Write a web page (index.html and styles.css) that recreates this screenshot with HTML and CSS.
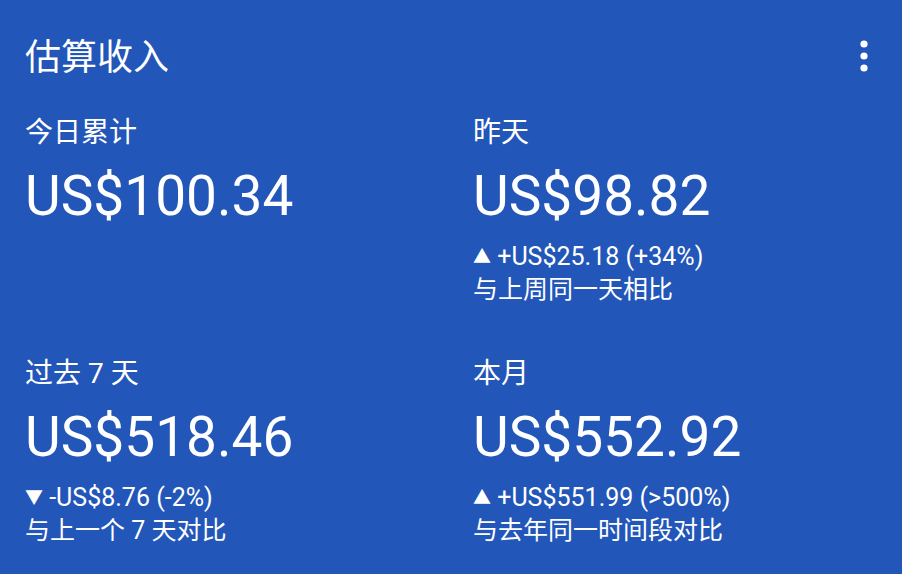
FILE: index.html
```html
<!DOCTYPE html>
<html lang="zh-CN">
<head>
    <meta charset="UTF-8">
    <meta name="viewport" content="width=device-width, initial-scale=1.0">
    <title>估算收入</title>
    <link rel="stylesheet" href="styles.css">
</head>
<body>
    <div class="card">
        <div class="card-header">
            <h1>估算收入</h1>
            <button class="menu-btn" aria-label="更多">
                <svg width="8" height="32" viewBox="0 0 8 32">
                    <circle cx="4" cy="4" r="3.6" fill="#fff"/>
                    <circle cx="4" cy="16" r="3.6" fill="#fff"/>
                    <circle cx="4" cy="28" r="3.6" fill="#fff"/>
                </svg>
            </button>
        </div>

        <div class="stats">
            <div class="stat">
                <div class="stat-label">今日累计</div>
                <div class="stat-value">US$100.34</div>
            </div>
            <div class="stat">
                <div class="stat-label">昨天</div>
                <div class="stat-value">US$98.82</div>
                <div class="stat-change"><span class="arrow">▲</span> +US$25.18 (+34%)</div>
                <div class="stat-compare">与上周同一天相比</div>
            </div>
            <div class="stat">
                <div class="stat-label">过去 7 天</div>
                <div class="stat-value">US$518.46</div>
                <div class="stat-change"><span class="arrow">▼</span> -US$8.76 (-2%)</div>
                <div class="stat-compare">与上一个 7 天对比</div>
            </div>
            <div class="stat">
                <div class="stat-label">本月</div>
                <div class="stat-value">US$552.92</div>
                <div class="stat-change"><span class="arrow">▲</span> +US$551.99 (&gt;500%)</div>
                <div class="stat-compare">与去年同一时间段对比</div>
            </div>
        </div>
    </div>
</body>
</html>
```

FILE: styles.css
```css
body {
    margin: 0;
    background-color: #2256b8;
    font-family: Roboto, "Noto Sans CJK SC", sans-serif;
    color: #ffffff;
}
.card {
    width: 902px;
    height: 574px;
    box-sizing: border-box;
    padding: 31px 25px 0 25px;
}
.card-header {
    display: flex;
    justify-content: space-between;
    align-items: center;
    height: 46px;
}
h1 {
    margin: 0;
    font-size: 36px;
    font-weight: 400;
}
.menu-btn {
    background: none;
    border: none;
    padding: 0;
    margin-right: 9px;
    margin-top: 3px;
    display: flex;
}
.stats {
    display: grid;
    grid-template-columns: 1fr 1fr;
    column-gap: 44px;
    margin-top: 40px;
}
.stat {
    height: 241px;
}
.stat-label {
    font-size: 28px;
    line-height: 32px;
    font-weight: 400;
}
.stat-value {
    font-size: 55px;
    line-height: 68px;
    margin-top: 13px;
}
.stat-change,
.stat-compare {
    font-size: 25px;
    line-height: 33px;
}
.stat-change {
    margin-top: 10px;
}
.arrow {
    font-size: 18px;
    vertical-align: 2px;
}
```
